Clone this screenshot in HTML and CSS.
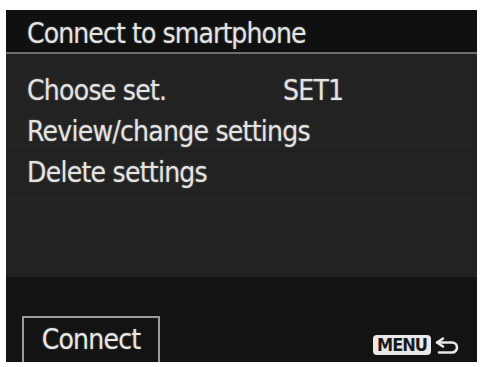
FILE: index.html
```html
<!DOCTYPE html>
<html>
<head>
<meta charset="utf-8">
<link rel="stylesheet" href="styles.css">
</head>
<body>
<div class="screen">
  <div class="title">Connect to smartphone</div>
  <div class="list">
    <div class="row"><span class="label">Choose set.</span><span class="value">SET1</span></div>
    <div class="row"><span class="label">Review/change settings</span></div>
    <div class="row"><span class="label">Delete settings</span></div>
    <div class="row"></div>
    <div class="row"></div>
  </div>
  <div class="bottom">
    <div class="btn">Connect</div>
    <div class="back">
      <span class="menu">MENU</span>
      <svg class="ret" width="28" height="17" viewBox="0 0 28 17">
        <path d="M9 1.5 L3 5.5 L9 9.5" fill="none" stroke="#e8e8e8" stroke-width="2.6" stroke-linejoin="round" stroke-linecap="round"/>
        <path d="M3.5 5.5 H18 A5 5 0 0 1 18 15.5 H5" fill="none" stroke="#e8e8e8" stroke-width="2.6" stroke-linecap="round"/>
      </svg>
    </div>
  </div>
</div>
</body>
</html>
```
FILE: styles.css
```css
html, body {
  margin: 0;
  padding: 0;
  background: #ffffff;
}
body {
  font-family: "DejaVu Sans Condensed", "DejaVu Sans", sans-serif;
  font-stretch: condensed;
}
.screen {
  margin: 10px 0 0 6px;
  width: 471px;
  height: 352px;
  background: #141414;
  display: flex;
  flex-direction: column;
  box-shadow: inset 1px 0 0 #6a6a6a, inset -2px 0 0 #8a8a8a, inset 0 1px 0 #555;
  overflow: hidden;
}
.title {
  height: 37px;
  padding: 5px 0 0 21px;
  line-height: 37px;
  font-size: 28px;
  letter-spacing: -0.9px;
  color: #e4e4e4;
  background: #101010;
  border-bottom: 2px solid #6e6e6e;
  text-shadow: 0 0 2px rgba(255,255,255,0.35);
  white-space: nowrap;
}
.list {
  background: #222222;
  padding-top: 16px;
  height: 207px;
}
.row {
  height: 40px;
  line-height: 41px;
  border-bottom: 1px solid #1d1d1d;
  display: grid;
  grid-template-columns: 256px auto;
  padding-left: 21px;
  font-size: 28px;
  letter-spacing: -0.75px;
  color: #e4e4e4;
  text-shadow: 0 0 2px rgba(255,255,255,0.35);
  white-space: nowrap;
}
.bottom {
  flex: 1;
  display: flex;
  align-items: flex-end;
  justify-content: space-between;
  padding: 0 15px 0 16px;
  background: #131313;
}
.btn {
  width: 134px;
  height: 41px;
  padding-top: 3px;
  border: 2px solid #9a9a9a;
  border-bottom-color: #777;
  line-height: 38px;
  text-align: center;
  font-size: 28px;
  letter-spacing: -0.8px;
  color: #e8e8e8;
  text-shadow: 0 0 2px rgba(255,255,255,0.35);
  margin-bottom: -2px;
}
.back {
  display: flex;
  align-items: center;
  gap: 3px;
  margin-bottom: 7px;
}
.menu {
  background: #e8e8e8;
  color: #1a1a1a;
  border-radius: 4px;
  font-weight: bold;
  font-size: 18px;
  line-height: 20px;
  padding: 0 4px;
  letter-spacing: -1px;
  display: inline-block;
}
.ret {
  display: block;
}
```
